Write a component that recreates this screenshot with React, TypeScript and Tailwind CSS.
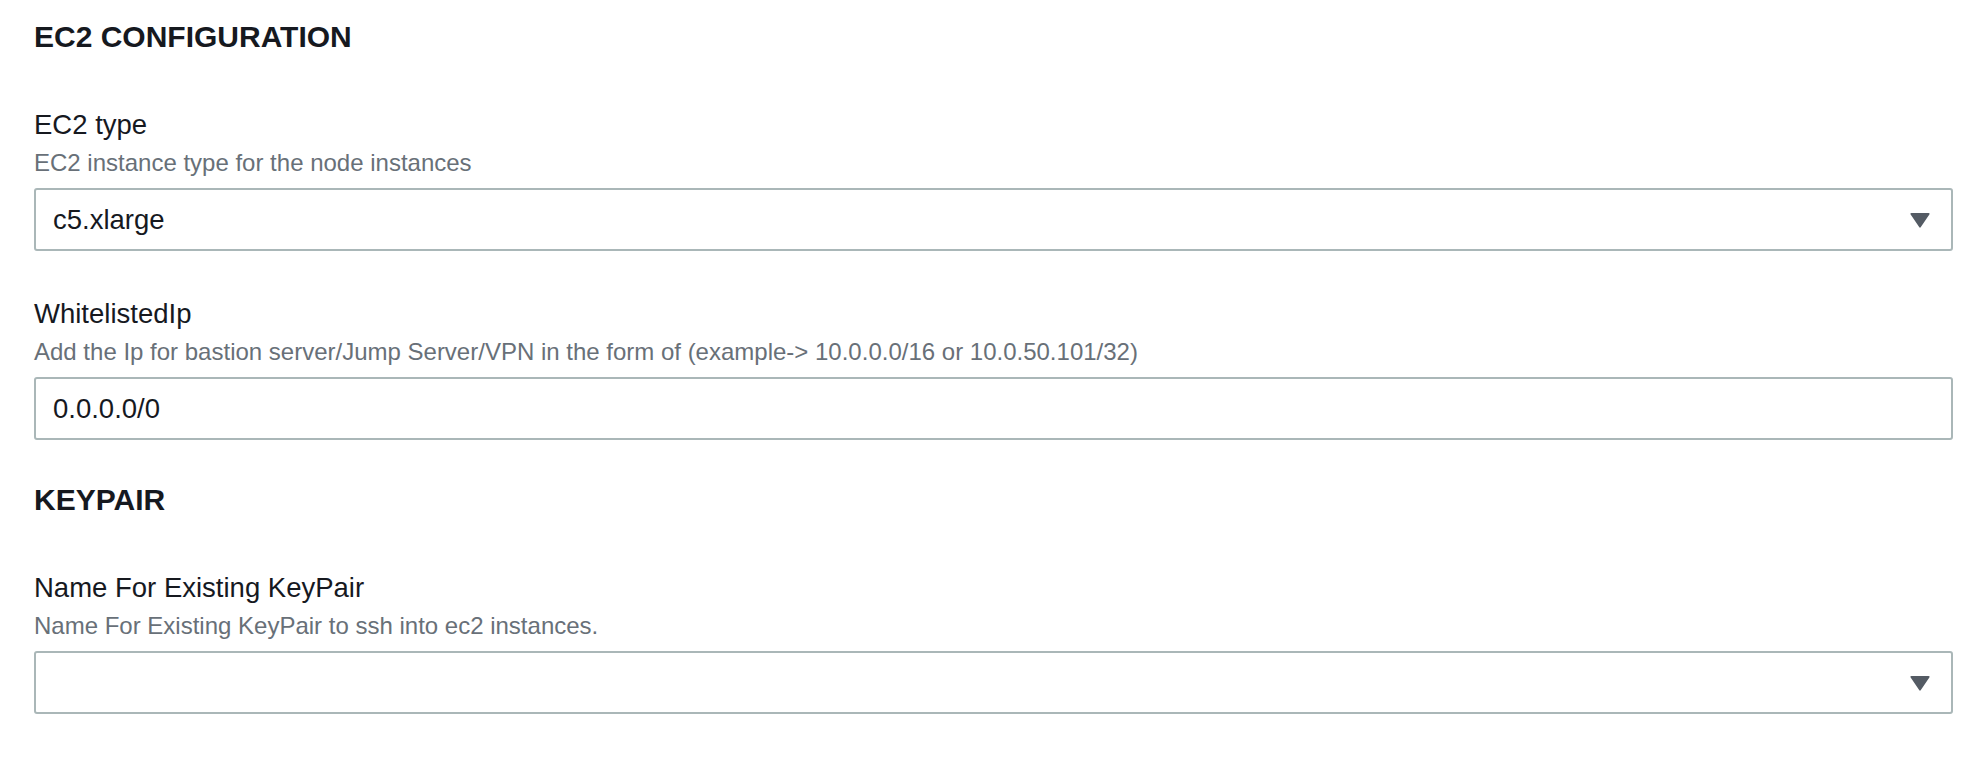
const font = { fontFamily: '"Liberation Sans", Arial, sans-serif' };

function Caret() {
  return (
    <svg className="w-[20px] h-[16px] shrink-0" viewBox="0 0 20 16" fill="#545b64">
      <path d="M1.5 1h17a1 1 0 0 1 .85 1.5l-8.5 12.6a1 1 0 0 1-1.7 0L.65 2.5A1 1 0 0 1 1.5 1z" />
    </svg>
  );
}

function Field({ label, description, children }: { label: string; description: string; children: React.ReactNode }) {
  return (
    <div>
      <div className="text-[27.5px] leading-[40px] text-[#16191f]">{label}</div>
      <div className="text-[24px] leading-[34px] text-[#687078] mt-px">{description}</div>
      <div className="mt-2">{children}</div>
    </div>
  );
}

function SelectBox({ value }: { value?: string }) {
  return (
    <div className="h-[63px] border-2 border-[#aab7b8] rounded-[3px] bg-white flex items-center pl-[17px] pr-[21px]">
      <span className="flex-1 text-[27.5px] text-[#16191f]">{value}</span>
      <Caret />
    </div>
  );
}

function TextBox({ value }: { value: string }) {
  return (
    <div className="h-[63px] border-2 border-[#aab7b8] rounded-[3px] bg-white flex items-center pl-[17px]">
      <span className="text-[27.5px] text-[#16191f]">{value}</span>
    </div>
  );
}

export default function App() {
  return (
    <div className="bg-white min-h-screen pl-[34px] pr-[21px] pt-[19px]" style={font}>
      <h2 className="text-[30px] leading-[36px] font-bold text-[#16191f]">EC2 CONFIGURATION</h2>

      <div className="mt-[50px] space-y-[43px]">
        <Field label="EC2 type" description="EC2 instance type for the node instances">
          <SelectBox value="c5.xlarge" />
        </Field>
        <Field
          label="WhitelistedIp"
          description="Add the Ip for bastion server/Jump Server/VPN in the form of (example-> 10.0.0.0/16 or 10.0.50.101/32)"
        >
          <TextBox value="0.0.0.0/0" />
        </Field>
      </div>

      <h2 className="mt-[42px] text-[30px] leading-[36px] font-bold text-[#16191f]">KEYPAIR</h2>

      <div className="mt-[50px]">
        <Field label="Name For Existing KeyPair" description="Name For Existing KeyPair to ssh into ec2 instances.">
          <SelectBox />
        </Field>
      </div>
    </div>
  );
}
